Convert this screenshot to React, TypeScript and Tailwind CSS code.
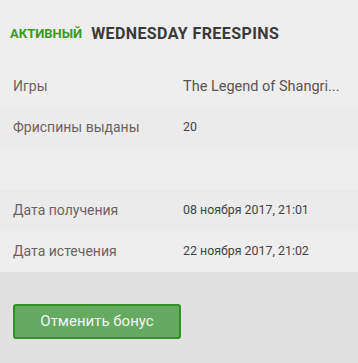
import React from 'react'

const rows: { label: string; value: string; big?: boolean }[] = [
  { label: 'Игры', value: 'The Legend of Shangri...', big: true },
  { label: 'Фриспины выданы', value: '20' },
  { label: '', value: '' },
  { label: 'Дата получения', value: '08 ноября 2017, 21:01' },
  { label: 'Дата истечения', value: '22 ноября 2017, 21:02' },
]

export default function App() {
  return (
    <div className="w-[358px] h-[363px] bg-[#e1e1e1] font-['Roboto',sans-serif] overflow-hidden">
      <div className="bg-[#eeeeee] h-[66px] flex items-center gap-[9px] px-[10px] pt-[1px]">
        <span className="text-[13px] font-bold uppercase text-[#3b9a1c]">Активный</span>
        <span className="text-[16px] font-bold uppercase tracking-[0.4px] text-[#3a3a3a]">Wednesday freespins</span>
      </div>
      <div>
        {rows.map((row, i) => (
          <div
            key={i}
            className={`flex items-center h-[41.2px] px-[13px] ${i % 2 === 0 ? 'bg-[#eeeeee]' : 'bg-[#ebebeb]'}`}
          >
            <div className="w-[170px] shrink-0 text-[14px] text-[#6b6363]">{row.label}</div>
            <div
              className={
                row.big
                  ? 'whitespace-nowrap text-[14.5px] text-[#5a5555]'
                  : 'whitespace-nowrap text-[12.4px] text-[#444444]'
              }
            >
              {row.value}
            </div>
          </div>
        ))}
      </div>
      <div className="pt-[32px] px-[13px]">
        <button className="w-[168px] h-[35px] rounded-[3px] border-2 border-[#2f9124] bg-[#66a960] text-[15px] text-[#f4f4f4]">
          Отменить бонус
        </button>
      </div>
    </div>
  )
}
